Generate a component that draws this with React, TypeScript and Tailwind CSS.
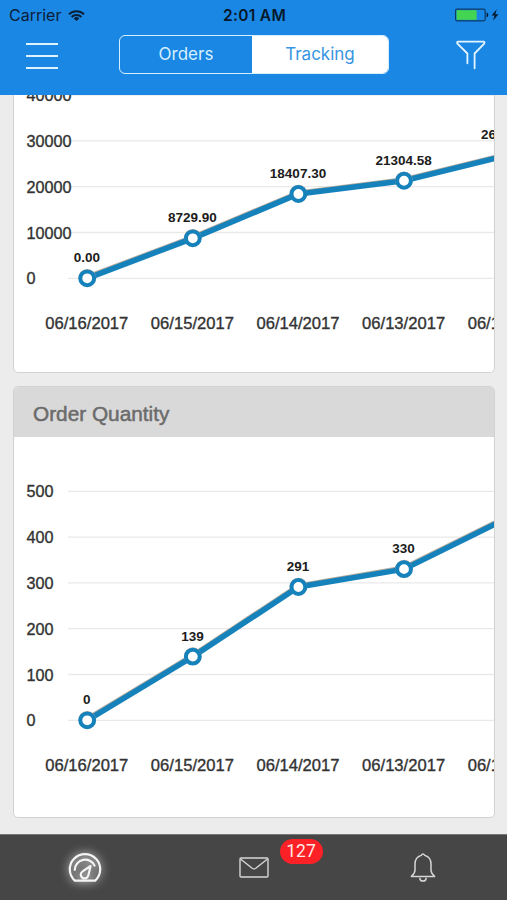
import { useState } from "react";

type Point = { date: string; value: number; label: string };

const AMOUNTS: Point[] = [
  { date: "06/16/2017", value: 0, label: "0.00" },
  { date: "06/15/2017", value: 8729.9, label: "8729.90" },
  { date: "06/14/2017", value: 18407.3, label: "18407.30" },
  { date: "06/13/2017", value: 21304.58, label: "21304.58" },
  { date: "06/12/2017", value: 26954.1, label: "26954.10" },
];

const QUANTITIES: Point[] = [
  { date: "06/16/2017", value: 0, label: "0" },
  { date: "06/15/2017", value: 139, label: "139" },
  { date: "06/14/2017", value: 291, label: "291" },
  { date: "06/13/2017", value: 330, label: "330" },
  { date: "06/12/2017", value: 444, label: "444" },
];

const FIRST_X = 73.2;
const STEP_X = 105.6;
const STEP_Y = 45.8;
const BASE_Y = 283.3;

export default function App() {
  const [tab, setTab] = useState<"orders" | "tracking">("tracking");

  return (
    <div className="flex h-[900px] w-[507px] flex-col overflow-hidden bg-[#ececec] font-['Inter',sans-serif]">
      <header className="h-[95px] shrink-0 bg-[#1a87e4]">
        <StatusBar />
        <div className="flex h-[50px] items-center">
          <button className="mt-[2px] ml-[26px] flex w-8 flex-col gap-[10px]" aria-label="Menu">
            <span className="h-[2px] bg-[#dff3ff]" />
            <span className="h-[2px] bg-[#dff3ff]" />
            <span className="h-[2px] bg-[#dff3ff]" />
          </button>
          <div className="mt-[-2px] ml-[61px] flex h-[39px] w-[270px] overflow-hidden rounded-md border-[1.5px] border-[#d5efff] text-[17px]">
            <Segment active={tab === "orders"} onClick={() => setTab("orders")}>
              Orders
            </Segment>
            <Segment active={tab === "tracking"} onClick={() => setTab("tracking")}>
              Tracking
            </Segment>
          </div>
          <button className="ml-[67px]" aria-label="Filter">
            <FilterIcon />
          </button>
        </div>
      </header>

      <main className="flex min-h-0 flex-1 flex-col justify-end gap-[13px] overflow-hidden pr-3 pb-4 pl-[13px]">
        <ChartCard title="Order Amount" points={AMOUNTS} tick={10000} ticks={5} height={377} />
        <ChartCard title="Order Quantity" points={QUANTITIES} tick={100} ticks={6} height={380} />
      </main>

      <TabBar />
    </div>
  );
}

function StatusBar() {
  return (
    <div className="flex h-[30px] items-center pr-[7px] pl-[9px] text-[#0a2038]">
      <div className="flex flex-1 items-center gap-[7px]">
        <span className="text-[16px]">Carrier</span>
        <svg viewBox="0 0 18 13" className="h-[13px] w-[17px]" fill="none" stroke="currentColor" strokeWidth="2.1">
          <path d="M1 5.2a11.3 11.3 0 0 1 16 0M3.8 8.1a7.3 7.3 0 0 1 10.4 0" />
          <path d="M9 12.3 6 9.6a4.4 4.4 0 0 1 6 0Z" fill="currentColor" stroke="none" />
        </svg>
      </div>
      <span className="pt-px text-[15.5px] font-semibold tracking-[0.3px] text-[#06182b]">2:01 AM</span>
      <div className="flex flex-1 items-center justify-end">
        <svg viewBox="0 0 46 14" className="h-[14px] w-[46px]">
          <rect x="1.6" y="1.2" width="29.6" height="11.6" rx="1.5" fill="none" stroke="#0b3a66" strokeWidth="1.2" />
          <rect x="2.6" y="2.2" width="20" height="9.6" fill="#43d551" />
          <path d="M32.6 4.6c2.2.6 2.2 4.2 0 4.8Z" fill="#06182b" />
          <path d="M42.8 1.2 37.6 7.6h3l-1.6 5.2 5.4-6.6h-3.1Z" fill="#06182b" />
        </svg>
      </div>
    </div>
  );
}

function Segment({
  active,
  onClick,
  children,
}: {
  active: boolean;
  onClick: () => void;
  children: string;
}) {
  return (
    <button
      onClick={onClick}
      className={active ? "w-[136px] bg-white pt-px text-[#3695e2]" : "flex-1 pt-px text-[#d5efff]"}
    >
      {children}
    </button>
  );
}

function FilterIcon() {
  return (
    <svg
      viewBox="0 0 30 30"
      className="h-[30px] w-[30px]"
      fill="none"
      stroke="#e3f5ff"
      strokeWidth="1.8"
      strokeLinecap="round"
      strokeLinejoin="round"
    >
      <path d="M11.4 23.3V13.5L1.4 3.6Q.6 1.8 2.200 1.600H27.400Q29 1.800 28.200 3.600L18.600 13.500V28.300" />
    </svg>
  );
}

function ChartCard({
  title,
  points,
  tick,
  ticks,
  height,
}: {
  title: string;
  points: Point[];
  tick: number;
  ticks: number;
  height: number;
}) {
  return (
    <section className="shrink-0 overflow-hidden rounded-[5px] border border-[#d2d2d2] bg-white font-['Liberation_Sans',sans-serif]">
      <h2 className="flex h-[50px] items-center bg-[#d9d9d9] px-[19px] pt-[3px] text-[20.8px] text-[#6b6b6b] [-webkit-text-stroke:0.5px_#6b6b6b]">
        {title}
      </h2>
      <LineChart points={points} tick={tick} ticks={ticks} height={height} />
    </section>
  );
}

function LineChart({
  points,
  tick,
  ticks,
  height,
}: {
  points: Point[];
  tick: number;
  ticks: number;
  height: number;
}) {
  const spots = points.map((p, i) => ({
    ...p,
    x: FIRST_X + i * STEP_X,
    y: BASE_Y - (p.value / tick) * STEP_Y,
  }));
  const path = spots.map((s) => `${s.x},${s.y}`).join(" ");

  return (
    <svg width="480" height={height} className="block">
      {Array.from({ length: ticks }, (_, i) => (
        <g key={i}>
          <line x1="54" x2="480" y1={BASE_Y - i * STEP_Y} y2={BASE_Y - i * STEP_Y} stroke="#e9e9e9" strokeWidth="1.3" />
          <text x="12.5" y={BASE_Y - i * STEP_Y + 6} fontSize="16.2" fill="#333" stroke="#333" strokeWidth="0.35">
            {i * tick}
          </text>
        </g>
      ))}

      <polyline points={path} fill="none" stroke="#b5ab9d" strokeWidth="5" transform="translate(-0.4 -1.1)" />
      <polyline points={path} fill="none" stroke="#1682bb" strokeWidth="5.6" />

      {spots.map((s) => (
        <g key={s.date} textAnchor="middle">
          <circle cx={s.x} cy={s.y - 0.5} r="7.8" fill="none" stroke="#b5ab9d" strokeWidth="2" />
          <circle cx={s.x} cy={s.y} r="6.9" fill="#fff" stroke="#1682bb" strokeWidth="4" />
          <text x={s.x - 0.4} y={s.y - 16} fontSize="13.5" fontWeight="700" fill="#1c1c1c">
            {s.label}
          </text>
          <text x={s.x - 0.4} y={BASE_Y + 50.7} fontSize="16.6" fill="#333" stroke="#333" strokeWidth="0.35">
            {s.date}
          </text>
        </g>
      ))}
    </svg>
  );
}

function TabBar() {
  return (
    <nav className="grid h-[66px] shrink-0 grid-cols-3 border-t border-[#777] bg-[#464646] text-[#d6d6d6]">
      <button className="flex items-center justify-center" aria-label="Dashboard">
        <GaugeIcon />
      </button>
      <button className="flex items-center justify-center" aria-label="Messages">
        <span className="relative">
          <MailIcon />
          <span className="absolute -top-[18px] left-[41px] flex h-[25px] w-[43px] items-center justify-center rounded-full bg-[#fb2127] font-['Roboto',sans-serif] text-[17.5px] text-[#ffe9e6]">
            127
          </span>
        </span>
      </button>
      <button className="flex items-center justify-center" aria-label="Alerts">
        <BellIcon />
      </button>
    </nav>
  );
}

function GaugeIcon() {
  return (
    <svg
      viewBox="0 0 34 30"
      className="h-[30px] w-[34px] overflow-visible drop-shadow-[0_0_5px_rgba(255,255,255,1)]"
      fill="none"
      stroke="#f4f4f4"
      strokeWidth="2.2"
      strokeLinecap="round"
      strokeLinejoin="round"
    >
      <path d="M6.8 27.6A15.2 15.2 0 1 1 27.2 27.6Z" />
      <path d="M6.8 16.8A10.4 10.4 0 0 1 26.6 12.6" />
      <path d="M22.6 13 14.600 18.400a3.800 3.800 0 1 0 5.700 4Z" />
    </svg>
  );
}

function MailIcon() {
  return (
    <svg
      viewBox="0 0 30 21"
      className="h-[21px] w-[30px]"
      fill="none"
      stroke="currentColor"
      strokeWidth="1.4"
      strokeLinejoin="round"
    >
      <rect x="1" y="1" width="28" height="19" rx="1" />
      <path d="M1.5 2 13.2 11.2q1.800 1.300 3.600 0L28.500 2" />
    </svg>
  );
}

function BellIcon() {
  return (
    <svg
      viewBox="0 0 26 30"
      className="mt-[-2px] h-[30px] w-[26px]"
      fill="none"
      stroke="currentColor"
      strokeWidth="1.5"
      strokeLinecap="round"
      strokeLinejoin="round"
    >
      <path d="M11.200 3.400Q13 .6 14.800 3.400C18.800 4.600 21 7.800 21 12v6.200c0 2.200.8 3.600 3.600 6.200H1.400C4.200 21.800 5 20.400 5 18.200V12C5 7.800 7.200 4.600 11.200 3.400Z" />
      <path d="M9.900 26.200a3.100 2.900 0 0 0 6.200 0" />
    </svg>
  );
}
